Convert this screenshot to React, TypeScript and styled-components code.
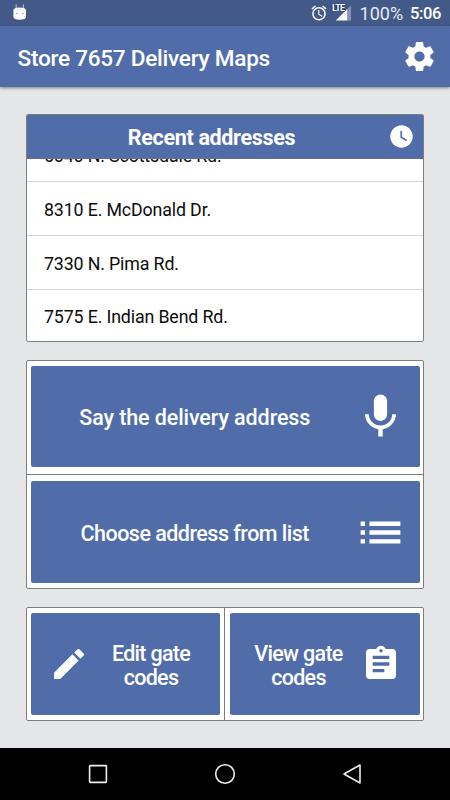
import React from "react";
import styled, { createGlobalStyle } from "styled-components";

const Global = createGlobalStyle`
  * { box-sizing: border-box; }
  html, body { margin: 0; padding: 0; background: #e5e6e8; }
  body { font-family: Roboto, "Liberation Sans", sans-serif; }
  svg { display: block; flex: none; }
`;

const blue = "#506daa";
const line = "#7d7f7f";

const Screen = styled.div`
  width: 450px;
  height: 800px;
  display: flex;
  flex-direction: column;
  background: #e5e6e8;
  overflow: hidden;
`;

const StatusBar = styled.div`
  height: 26px;
  flex: none;
  display: flex;
  align-items: center;
  justify-content: space-between;
  padding: 0 9px 0 12px;
  background: #435988;
  color: #fff;
`;

const StatusGroup = styled.div`
  display: flex;
  align-items: center;
`;

const Battery = styled.span`
  margin-left: 8px;
  font-size: 18px;
  line-height: 26px;
  padding-top: 2px;
  color: #e6eaf2;
`;

const Clock = styled.span`
  margin-left: 7px;
  font-size: 16.5px;
  font-weight: 500;
  line-height: 26px;
  padding-top: 2px;
  letter-spacing: -0.4px;
`;

const AppBar = styled.header`
  height: 61px;
  flex: none;
  display: flex;
  align-items: center;
  justify-content: space-between;
  padding: 0 13.5px 0 17.5px;
  background: ${blue};
  box-shadow: 0 1px 3px rgba(0, 0, 0, 0.45);
`;

const Title = styled.h1`
  margin: 0;
  padding-top: 4px;
  color: #fff;
  font-size: 22.6px;
  font-weight: 500;
  line-height: 28px;
  letter-spacing: -0.27px;
  white-space: nowrap;
`;

const Content = styled.main`
  flex: 1;
  display: flex;
  flex-direction: column;
  gap: 18px;
  padding: 27px 26px 0;
`;

const Card = styled.section<{ $height: number; $row?: boolean }>`
  height: ${(p) => p.$height}px;
  flex: none;
  display: flex;
  flex-direction: ${(p) => (p.$row ? "row" : "column")};
  border: 1px solid ${line};
  border-radius: 2px;
  background: #fff;
  overflow: hidden;
`;

const CardHeader = styled.div`
  height: 44px;
  flex: none;
  display: flex;
  align-items: center;
  padding: 0 8px 0 7px;
  background: ${blue};
  border-bottom: 1px solid #66708a;
`;

const CardTitle = styled.h2`
  flex: 1;
  margin: 0;
  padding: 2px 0 0 1px;
  color: #fff;
  font-size: 21.5px;
  font-weight: 700;
  line-height: 26px;
  letter-spacing: -0.33px;
  text-align: center;
  white-space: nowrap;
`;

const ListViewport = styled.div`
  flex: 1;
  min-height: 0;
  display: flex;
  flex-direction: column;
  justify-content: flex-end;
  overflow: hidden;
`;

const AddressRow = styled.div`
  height: 54px;
  flex: none;
  display: flex;
  align-items: center;
  padding: 1px 17px 0;
  color: #0b0b0b;
  font-size: 17.8px;
  letter-spacing: -0.14px;
  border-bottom: 1px solid #d3d3d3;
  white-space: nowrap;
  &:last-child {
    height: 51px;
    border-bottom: 0;
    padding-top: 2px;
  }
`;

const Cell = styled.div<{ $pad: string; $divider?: "bottom" | "right"; $basis: string }>`
  flex: 0 0 ${(p) => p.$basis};
  display: flex;
  padding: ${(p) => p.$pad};
  border: 0 solid ${line};
  border-bottom-width: ${(p) => (p.$divider === "bottom" ? 1 : 0)}px;
  border-right-width: ${(p) => (p.$divider === "right" ? 1 : 0)}px;
`;

const ActionButton = styled.button<{ $pad: string }>`
  flex: 1;
  display: flex;
  align-items: center;
  margin: 0;
  padding: ${(p) => p.$pad};
  border: 0;
  border-radius: 2px;
  background: ${blue};
  color: #fff;
  font-family: inherit;
  font-size: 21.5px;
  font-weight: 500;
  line-height: 24px;
  text-align: center;
`;

const Label = styled.span<{ $tracking: number }>`
  flex: 1;
  padding-top: 3px;
  letter-spacing: ${(p) => p.$tracking}px;
  white-space: nowrap;
`;

const NavBar = styled.nav`
  height: 52px;
  flex: none;
  display: grid;
  grid-template-columns: repeat(3, 127px);
  justify-content: center;
  justify-items: center;
  align-items: center;
  background: #000;
`;

const Icon = ({ size, d }: { size: number; d: string }) => (
  <svg width={size} height={size} viewBox="0 0 24 24" fill="#fff">
    <path d={d} />
  </svg>
);

const icons = {
  gear: "M19.43 12.98c.04-.32.07-.64.07-.98s-.03-.66-.07-.98l2.11-1.65c.19-.15.24-.42.12-.64l-2-3.46c-.12-.22-.39-.3-.61-.22l-2.49 1c-.52-.4-1.08-.73-1.69-.98l-.38-2.65C14.46 2.18 14.25 2 14 2h-4c-.25 0-.46.18-.49.42l-.38 2.65c-.61.25-1.17.59-1.69.98l-2.49-1c-.23-.09-.49 0-.61.22l-2 3.46c-.13.22-.07.49.12.64l2.11 1.65c-.04.32-.07.65-.07.98s.03.66.07.98l-2.11 1.65c-.19.15-.24.42-.12.64l2 3.46c.12.22.39.3.61.22l2.49-1c.52.4 1.08.73 1.69.98l.38 2.65c.03.24.24.42.49.42h4c.25 0 .46-.18.49-.42l.38-2.65c.61-.25 1.17-.59 1.69-.98l2.49 1c.23.09.49 0 .61-.22l2-3.46c.12-.22.07-.49-.12-.64l-2.11-1.65zM12 15.5c-1.93 0-3.5-1.57-3.5-3.5s1.57-3.5 3.5-3.5 3.5 1.57 3.5 3.5-1.57 3.5-3.5 3.5z",
  clock: "M12 2C6.5 2 2 6.5 2 12s4.5 10 10 10 10-4.5 10-10S17.5 2 12 2zm4.2 14.2L11 13V7h1.5v5.2l4.5 2.7-.8 1.3z",
  mic: "M12 14c1.66 0 2.99-1.34 2.99-3L15 5c0-1.66-1.34-3-3-3S9 3.34 9 5v6c0 1.66 1.34 3 3 3zm5.3-3c0 3-2.54 5.1-5.3 5.1S6.7 14 6.7 11H5c0 3.41 2.72 6.23 6 6.72V21h2v-3.28c3.28-.48 6-3.3 6-6.72h-1.7z",
  list: "M3 13h2v-2H3v2zm0 4h2v-2H3v2zm0-8h2V7H3v2zm4 4h14v-2H7v2zm0 4h14v-2H7v2zM7 7v2h14V7H7z",
  pencil: "M3 17.25V21h3.75L17.81 9.94l-3.75-3.75L3 17.25zM20.71 7.04c.39-.39.39-1.02 0-1.41l-2.34-2.34c-.39-.39-1.02-.39-1.41 0l-1.83 1.83 3.75 3.75 1.83-1.83z",
  clipboard: "M19 3h-4.18C14.4 1.84 13.3 1 12 1c-1.3 0-2.4.84-2.82 2H5c-1.1 0-2 .9-2 2v14c0 1.1.9 2 2 2h14c1.1 0 2-.9 2-2V5c0-1.1-.9-2-2-2zm-7 0c.55 0 1 .45 1 1s-.45 1-1 1-1-.45-1-1 .45-1 1-1zm2 14H7v-2h7v2zm3-4H7v-2h10v2zm0-4H7V7h10v2z",
  alarm: "M22 5.72l-4.6-3.86-1.29 1.53 4.6 3.86L22 5.72zM7.88 3.39L6.6 1.86 2 5.71l1.29 1.53 4.59-3.85zM12.5 8H11v6l4.75 2.85.75-1.23-4-2.37V8zM12 4c-4.97 0-9 4.03-9 9s4.02 9 9 9c4.97 0 9-4.03 9-9s-4.03-9-9-9zm0 16c-3.87 0-7-3.13-7-7s3.13-7 7-7 7 3.13 7 7-3.13 7-7 7z",
};

const MascotIcon = () => (
  <svg width="15" height="18" viewBox="0 0 15 18">
    <path d="M4.2 0.5v4M11.3 0.5v4" stroke="#c5cfe0" strokeWidth="1" />
    <path d="M3 4.2Q7.5 2.8 12.5 4.2L14 5.7V13Q13.6 15.8 7.7 15.8T1.4 13V5.7Z" fill="#fff" />
    <path d="M2 6.2Q7.5 5.1 13.4 6.2" stroke="#cfd8e8" strokeWidth=".6" fill="none" />
    <circle cx="4.8" cy="9.5" r=".6" fill="#435988" />
    <circle cx="10.8" cy="9.5" r=".6" fill="#435988" />
  </svg>
);

const Signal = styled.span`
  position: relative;
  width: 20px;
  height: 18px;
  margin-left: 4px;
`;

const Lte = styled.span`
  position: absolute;
  left: 0.5px;
  top: 0;
  color: #fff;
  font-size: 9px;
  font-weight: 700;
  line-height: 9px;
  letter-spacing: -0.8px;
  text-shadow: 1px 0 1px #1c2f6e, -1px 0 1px #1c2f6e;
`;

const SignalIcon = () => (
  <svg width="20" height="18" viewBox="0 0 20 18">
    <path d="M15.2 5.5L19 1.7V16.5h-3.8z" fill="#8594b4" />
    <path d="M15.2 5V16.5H3.8z" fill="#fff" />
  </svg>
);

const addresses = [
  "6040 N. Scottsdale Rd.",
  "8310 E. McDonald Dr.",
  "7330 N. Pima Rd.",
  "7575 E. Indian Bend Rd.",
];

export default function App() {
  return (
    <Screen>
      <Global />
      <StatusBar>
        <MascotIcon />
        <StatusGroup>
          <Icon size={18} d={icons.alarm} />
          <Signal>
            <SignalIcon />
            <Lte>LTE</Lte>
          </Signal>
          <Battery>100%</Battery>
          <Clock>5:06</Clock>
        </StatusGroup>
      </StatusBar>
      <AppBar>
        <Title>Store 7657 Delivery Maps</Title>
        <Icon size={35} d={icons.gear} />
      </AppBar>
      <Content>
        <Card $height={228}>
          <CardHeader>
            <CardTitle>Recent addresses</CardTitle>
            <Icon size={27} d={icons.clock} />
          </CardHeader>
          <ListViewport>
            {addresses.map((a) => (
              <AddressRow key={a}>{a}</AddressRow>
            ))}
          </ListViewport>
        </Card>
        <Card $height={229}>
          <Cell $basis="114px" $pad="5px 3.5px 7px 4px" $divider="bottom">
            <ActionButton $pad="0 13px 0 5px">
              <Label $tracking={-0.1}>Say the delivery address</Label>
              <Icon size={53} d={icons.mic} />
            </ActionButton>
          </Cell>
          <Cell $basis="113px" $pad="6px 3.5px 5px 4px">
            <ActionButton $pad="0 13px 0 5px">
              <Label $tracking={-0.52}>Choose address from list</Label>
              <Icon size={53} d={icons.list} />
            </ActionButton>
          </Cell>
        </Card>
        <Card $height={114} $row>
          <Cell $basis="198px" $pad="5px 4px 5px 4px" $divider="right">
            <ActionButton $pad="0 7px 0 18px">
              <Icon size={40} d={icons.pencil} />
              <Label $tracking={-0.7}>Edit gate<br />codes</Label>
            </ActionButton>
          </Cell>
          <Cell $basis="198px" $pad="5px 3.5px 5px 4.5px">
            <ActionButton $pad="0 18.5px 0 6.5px">
              <Label $tracking={-0.7}>View gate<br />codes</Label>
              <Icon size={40} d={icons.clipboard} />
            </ActionButton>
          </Cell>
        </Card>
      </Content>
      <NavBar>
        <svg width="20" height="20" viewBox="0 0 20 20" fill="none" stroke="#eee" strokeWidth="1.6">
          <rect x="1.6" y="1.6" width="16.8" height="16.8" rx=".6" />
        </svg>
        <svg width="22" height="22" viewBox="0 0 22 22" fill="none" stroke="#eee" strokeWidth="1.6">
          <circle cx="11" cy="11" r="9.3" />
        </svg>
        <svg width="20" height="22" viewBox="0 0 20 22" fill="none" stroke="#eee" strokeWidth="1.6" strokeLinejoin="round">
          <path d="M18 2V20L2 11Z" />
        </svg>
      </NavBar>
    </Screen>
  );
}
